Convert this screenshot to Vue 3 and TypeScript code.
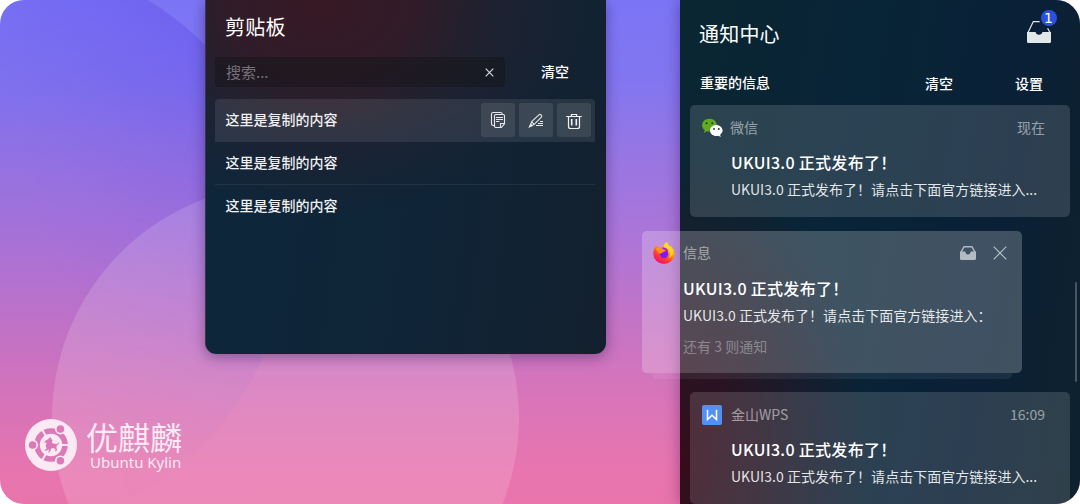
<script setup lang="ts">
import { ref } from 'vue'

interface Clip {
  id: number
  text: string
}

interface Notice {
  id: string
  app: string
  time?: string
  title: string
  body: string
  more?: string
  floating?: boolean
}

const clips = ref<Clip[]>([
  { id: 1, text: '这里是复制的内容' },
  { id: 2, text: '这里是复制的内容' },
  { id: 3, text: '这里是复制的内容' },
])
const activeClip = ref(1)

const notices: Notice[] = [
  { id: 'wechat', app: '微信', time: '现在', title: 'UKUI3.0 正式发布了！', body: 'UKUI3.0 正式发布了！请点击下面官方链接进入...' },
  { id: 'firefox', app: '信息', title: 'UKUI3.0 正式发布了！', body: 'UKUI3.0 正式发布了！请点击下面官方链接进入：', more: '还有 3 则通知', floating: true },
  { id: 'wps', app: '金山WPS', time: '16:09', title: 'UKUI3.0 正式发布了！', body: 'UKUI3.0 正式发布了！请点击下面官方链接进入...' },
]
</script>

<template>
  <div class="desktop">
    <svg class="wallpaper" viewBox="0 0 1080 504" aria-hidden="true">
      <defs>
        <linearGradient id="disc" gradientUnits="userSpaceOnUse" x1="0" y1="60" x2="270" y2="0">
          <stop offset="0" stop-color="#5a45e6" stop-opacity="0.14" />
          <stop offset="1" stop-color="#4a30e4" stop-opacity="0.38" />
        </linearGradient>
        <linearGradient id="fade" x1="0" y1="0" x2="0" y2="1">
          <stop offset="0" stop-color="#fff" />
          <stop offset="0.5" stop-color="#fff" stop-opacity="0.45" />
          <stop offset="0.88" stop-color="#fff" stop-opacity="0.06" />
        </linearGradient>
        <mask id="discMask"><rect y="-40" width="300" height="570" fill="url(#fade)" /></mask>
      </defs>
      <circle cx="3" cy="244" r="283.5" fill="url(#disc)" mask="url(#discMask)" />
      <circle cx="285.5" cy="418" r="233.5" fill="#fff" fill-opacity="0.15" />
    </svg>

    <div class="brand">
      <svg class="brand-mark" viewBox="0 0 52 52">
        <circle cx="26" cy="26" r="26" fill="#fbe9f3" />
        <circle cx="26" cy="26" r="14" fill="none" stroke="#dc7ab7" stroke-width="5.6" />
        <g stroke="#fbe9f3" stroke-width="2">
          <path d="M35 26h9M21.5 18.2l-5-8.6M21.5 33.8l-5 8.6" />
        </g>
        <g fill="#dc7ab7" stroke="#fbe9f3" stroke-width="1.6">
          <circle cx="7.6" cy="26" r="4.6" />
          <circle cx="35.4" cy="10" r="4.6" />
          <circle cx="35.4" cy="41.8" r="4.6" />
        </g>
        <path fill="#dc7ab7" d="M25.5 18l.8 1.8 1.2 1.6-.8 2.2 2.2 1.2 3 .1 2.6-1.9-.8 2.3-1.9 1.1-.4 2.300.8 2.600-2.300 1.500.6-2.500-1.800-1.200-2.600.5-.4 2.100-2.600 2.500 1.200-3.900-3.500 1.800-1.600-1.200 2.400-1-.8-3.200.8-3.300-2.200.3.600-1.700 3.200-2z" />
      </svg>
      <div class="brand-text">
        <span class="brand-zh">优麒麟</span>
        <span class="brand-en">Ubuntu Kylin</span>
      </div>
    </div>

    <section class="clipboard">
      <h2>剪贴板</h2>
      <div class="search-row">
        <div class="search">
          <span>搜索...</span>
          <svg viewBox="0 0 9 9" width="9" height="9"><path d="M.7.7l7.6 7.6M8.3.7L.7 8.3" stroke="#dedce1" stroke-width="1.1" /></svg>
        </div>
        <button class="link">清空</button>
      </div>
      <ul>
        <li v-for="clip in clips" :key="clip.id" :class="{ active: clip.id === activeClip }">
          <span class="clip-text">{{ clip.text }}</span>
          <div v-if="clip.id === activeClip" class="actions">
            <button>
              <svg viewBox="0 0 34 34" fill="none" stroke="#e6e7ea" stroke-width="1.1">
                <path d="M13 22.5h-.8a1.7 1.7 0 0 1-1.7-1.7v-9.6a1.7 1.7 0 0 1 1.7-1.7h7.3a1.7 1.7 0 0 1 1.7 1.7" />
                <path d="M14.7 11.5h7.6a1.2 1.2 0 0 1 1.2 1.2v8.1l-3.2 3.7h-5.600a1.200 1.200 0 0 1-1.200-1.200v-10.600a1.200 1.200 0 0 1 1.200-1.200z" />
                <path d="M15 14.5h7M15 16.5h7M15 18.5h3.4M19.5 24.3v-3.8H23.5" />
              </svg>
            </button>
            <button>
              <svg viewBox="0 0 34 34" fill="none" stroke="#e6e7ea" stroke-width="1.1">
                <path d="M12.6 18.7l7.3-6.9a1.4 1.4 0 0 1 2 0l.4.4a1.4 1.4 0 0 1 0 2l-7 7.1-4.3 2.2zM12.6 18.7l2.6 2.6" />
                <path d="M10.4 23.9l1.2-2.8 1.5 1.5z" fill="#e6e7ea" />
                <path d="M21 18.500h3M19 20.500h5M17 22.500h7" />
              </svg>
            </button>
            <button>
              <svg viewBox="0 0 34 34" fill="none" stroke="#f0f1f3" stroke-width="1.2">
                <path d="M9.2 13.5h15.6M14.4 13.2v-1.7h5.2v1.7M11.5 13.5v10a2 2 0 0 0 2 2h7a2 2 0 0 0 2-2v-10" />
                <path d="M14.7 16v6.4M19.3 16v6.4" stroke-width="1.6" />
              </svg>
            </button>
          </div>
        </li>
      </ul>
    </section>

    <section class="center">
      <header>
        <h2>通知中心</h2>
        <div class="inbox">
          <svg viewBox="0 0 24 22" width="24" height="22">
            <path d="M.8 12L6.3.6h6.4M20.6 7.2L23.2 12" fill="none" stroke="#e2e7ea" stroke-width="1.2" />
            <path d="M0 11h8.6c.3 1.7 1.4 2.8 3.4 2.8s3.1-1.1 3.4-2.8H24v9.5a1.5 1.5 0 0 1-1.5 1.5h-21A1.5 1.5 0 0 1 0 20.5z" fill="#e2e7ea" />
          </svg>
          <b>1</b>
        </div>
      </header>
      <nav>
        <span>重要的信息</span>
        <button class="link">清空</button>
        <button class="link">设置</button>
      </nav>

      <div class="notices">
        <article v-for="n in notices" :key="n.id" :class="[n.id, { floating: n.floating }]">
          <div class="top">
            <svg v-if="n.id === 'wechat'" class="app-icon" viewBox="0 0 22 22">
              <path d="M7.5 1.8C3.4 1.8.1 4.6.1 8.2c0 2 1 3.7 2.7 4.9l-.9 2.9 3.1-1.7c.8.2 1.6.3 2.5.3 4.1 0 7.3-2.8 7.3-6.4s-3.2-6.4-7.3-6.4z" fill="#62ab1e" />
              <circle cx="4.6" cy="6.3" r="1" fill="#183a10" /><circle cx="10.3" cy="6.3" r="1" fill="#183a10" />
              <path d="M14.3 8c-3.5 0-6.3 2.5-6.3 5.5s2.8 5.5 6.3 5.5c.7 0 1.4-.1 2-.3l2.5 1.3-.7-2.3c1.5-1 2.5-2.5 2.5-4.2 0-3-2.8-5.5-6.3-5.5z" fill="#fff" />
              <circle cx="12" cy="12" r=".9" fill="#1d2c33" /><circle cx="16.8" cy="12" r=".9" fill="#1d2c33" />
            </svg>
            <svg v-else-if="n.id === 'firefox'" class="app-icon" viewBox="0 0 22 24">
              <defs>
                <linearGradient id="fx" x1=".85" y1=".1" x2=".3" y2="1">
                  <stop offset="0" stop-color="#ffdf1a" /><stop offset=".35" stop-color="#ffa01c" />
                  <stop offset=".65" stop-color="#ff4526" /><stop offset="1" stop-color="#f5087d" />
                </linearGradient>
              </defs>
              <path d="M2.4 6.2L3.2 4.5 5 6.3c1.7-.7 3.2-.7 4.8-.3C10.3 3.8 12 2 14 .8c.2 2.4 1.6 3.3 3.3 5 .4-.1.5-.5.5-1.1 2.7 2.8 4 5.6 3.9 8.4A10.7 10.2 0 0 1 11 23 10.7 10.2 0 0 1 .3 12.900c0-2.700.7-5.100 2.100-6.700z" fill="url(#fx)" />
              <path d="M14 1.2c-2 1.8-3.5 3.4-2.9 5.2 3.8.3 5.5 2.8 6.2 5.7.3 2.4-.5 4-1.7 5.4 5.5-3.3 5.5-8.2 1.7-11.5C15.4 4.7 14.4 3.2 14 1.2z" fill="#ffdc1c" />
              <circle cx="11" cy="13" r="4.2" fill="#8118f0" />
              <path d="M8.5 6.8c3-.9 5.8.3 6.5 3.2l-.2 2.5-3-3z" fill="#b01ae0" />
              <path d="M2.8 7c2.8-.7 4.8.7 6.8 1.5l3.2.8c-.6 1.8-2.7 1.7-3.7 2.4-1 .7-1.600 1-2.600.8C5 11.800 3.500 9.700 2.800 7z" fill="#ff921b" />
            </svg>
            <svg v-else class="app-icon" viewBox="0 0 20 20">
              <rect width="20" height="20" rx="2" fill="#5390f5" />
              <path d="M5.5 4.8v9.7L10 10.3l4.5 4.2V4.8" fill="none" stroke="#fff" stroke-width="1.5" />
            </svg>
            <span class="app-name">{{ n.app }}</span>
            <time v-if="n.time">{{ n.time }}</time>
            <div v-else class="tools">
              <svg viewBox="0 0 16 14" width="16" height="14">
                <path d="M.9 6.5L4 .7h8l3.1 5.8" fill="none" stroke="#b3bcc3" stroke-width="1.4" />
                <path d="M0 5.6h5.3c.2 2 1 2.900 2.700 2.900s2.500-.9 2.700-2.900H16v6.900a1.500 1.500 0 0 1-1.500 1.500h-13A1.500 1.500 0 0 1 0 12.500z" fill="#b3bcc3" />
              </svg>
              <svg viewBox="0 0 14 14" width="14" height="14"><path d="M.7.7l12.6 12.6M13.3.7L.7 13.3" stroke="#b3bcc3" stroke-width="1.2" /></svg>
            </div>
          </div>
          <h3>{{ n.title }}</h3>
          <p>{{ n.body }}</p>
          <p v-if="n.more" class="more">{{ n.more }}</p>
        </article>
      </div>
      <i class="scrollbar"></i>
    </section>
  </div>
</template>

<style>
body {
  background: #fff;
  overflow: hidden;
}
</style>

<style scoped>
.desktop {
  position: relative;
  box-sizing: border-box;
  width: 1080px;
  height: 504px;
  overflow: hidden;
  border-radius: 24px;
  background: linear-gradient(180deg, #7b75f6 0%, #8276f0 16%, #9976e2 32%, #ab75d8 46%, #c474c6 64%, #da75b8 80%, #e875ae 94%, #ea74ac 100%);
  font-family: "Noto Sans CJK SC", sans-serif;
  font-size: 14px;
  color: #fff;
}
.wallpaper {
  position: absolute;
  inset: 0;
  width: 1080px;
  height: 504px;
}
h2, h3, p, ul {
  margin: 0;
  padding: 0;
}
h2 {
  font-size: 20px;
  font-weight: 400;
  line-height: 30px;
  letter-spacing: 0.2px;
}
button {
  padding: 0;
  border: 0;
  background: none;
  color: inherit;
  font: inherit;
}
.link {
  font-weight: 500;
  line-height: 20px;
}

.brand {
  position: absolute;
  left: 25px;
  top: 419px;
  display: flex;
  color: #fbe9f3;
}
.brand-mark {
  width: 52px;
  height: 52px;
}
.brand-text {
  display: flex;
  flex-direction: column;
  margin-left: 9px;
  padding-top: 3px;
  white-space: nowrap;
}
.brand-zh {
  font-family: "Liberation Sans", "Noto Sans CJK SC", sans-serif;
  font-size: 32px;
  line-height: 34px;
  height: 31px;
}
.brand-en {
  margin-left: 4px;
  font-family: "Noto Sans", sans-serif;
  font-size: 15px;
  line-height: 18px;
}

.clipboard {
  position: absolute;
  left: 205px;
  top: 0;
  box-sizing: border-box;
  width: 401px;
  height: 354px;
  padding: 12px 11px 0 10px;
  border-radius: 0 0 11px 11px;
  background:
    radial-gradient(ellipse 275px 215px at 115px 0, rgba(58, 24, 36, 0.96), rgba(54, 27, 38, 0.85) 35%, rgba(42, 32, 44, 0.5) 65%, rgba(24, 32, 48, 0) 100%),
    linear-gradient(98deg, #0d263a 10%, #0f2437 55%, #13212f 95%);
  box-shadow: 0 3px 14px rgba(30, 10, 60, 0.4), inset 1px 0 0 rgba(80, 70, 80, 0.6);
}
.clipboard h2 {
  margin-left: 10px;
}
.search-row {
  display: flex;
  align-items: center;
  margin-top: 15px;
}
.search {
  box-sizing: border-box;
  display: flex;
  align-items: center;
  justify-content: space-between;
  width: 290px;
  height: 30px;
  padding: 0 11px;
  border-radius: 4px;
  background: rgba(20, 20, 24, 0.5);
  color: #77707a;
  font-size: 15px;
}
.search span {
  margin-top: -1px;
}
.search-row .link {
  margin: -2px 0 0 36px;
}
.clipboard ul {
  margin-top: 12px;
  list-style: none;
}
.clipboard li {
  box-sizing: border-box;
  display: flex;
  align-items: center;
  justify-content: space-between;
  height: 43px;
  padding: 0 4px 0 10.5px;
  border-bottom: 1px solid rgba(255, 255, 255, 0.07);
  font-weight: 500;
  color: #f0f0f2;
}
.clip-text {
  margin-top: -2px;
}
.clipboard li:last-child {
  border-bottom-color: transparent;
}
.clipboard li.active {
  border-radius: 4px 4px 0 0;
  background: rgba(255, 255, 255, 0.09);
  border-bottom-color: transparent;
}
.actions {
  display: flex;
  gap: 4px;
}
.actions button {
  width: 34px;
  height: 34px;
  border-radius: 3px;
  background: rgba(255, 255, 255, 0.09);
}
.actions svg {
  display: block;
  width: 34px;
  height: 34px;
}

.center {
  position: absolute;
  left: 680px;
  top: 0;
  box-sizing: border-box;
  width: 400px;
  height: 504px;
  padding: 19px 10px 0;
  background:
    radial-gradient(ellipse 190px 300px at 0 460px, rgba(56, 10, 24, 0.95), rgba(52, 14, 28, 0.72) 35%, rgba(20, 28, 46, 0) 100%),
    linear-gradient(100deg, #0a2632 0%, #082437 40%, #0a2036 75%, #0e212e 95%);
  box-shadow: 0 0 14px rgba(40, 10, 60, 0.4);
}
.center header {
  display: flex;
  justify-content: space-between;
  padding: 0 19px 0 9px;
}
.inbox {
  position: relative;
  height: 22px;
  padding-top: 2px;
}
.inbox svg {
  display: block;
}
.inbox b {
  position: absolute;
  left: 13.5px;
  top: -9px;
  width: 16px;
  height: 16px;
  border-radius: 50%;
  background: #2b50dc;
  font: 400 14px/16px "DejaVu Sans", sans-serif;
  text-align: center;
}
.center nav {
  display: flex;
  align-items: center;
  margin-top: 23px;
  padding-left: 10px;
  height: 21px;
  font-weight: 500;
}
.center nav span {
  width: 225px;
  line-height: 20px;
  margin-top: -2px;
}
.center nav .link {
  width: 28px;
  margin-right: 62px;
}
.center nav .link:last-child {
  margin-right: 0;
}
.notices {
  display: flex;
  flex-direction: column;
  margin-top: 12px;
}
article {
  position: relative;
  box-sizing: border-box;
  width: 380px;
  height: 112px;
  flex: none;
  padding: 10px 25px 0 12px;
  border-radius: 5px;
  background: rgba(255, 255, 255, 0.14);
  white-space: nowrap;
}
.top {
  display: flex;
  align-items: center;
  height: 25px;
  color: rgba(255, 255, 255, 0.52);
}
.app-icon {
  width: 20px;
  height: 20px;
  margin: 1px 9px 0 0;
  overflow: visible;
}
.wechat .app-icon {
  width: 22px;
  height: 22px;
  margin: 0 6px 0 0;
}
.firefox .app-icon {
  width: 22px;
  height: 24px;
  margin: 0 8px 2px -1px;
}
.app-name {
  line-height: 20px;
  margin-bottom: 1px;
}
.firefox .app-name {
  margin-bottom: 3px;
}
time {
  margin: 0 0 2px auto;
  line-height: 20px;
}
h3 {
  margin: 10px 0 0 29px;
  font-size: 16px;
  font-weight: 500;
  line-height: 24px;
  letter-spacing: 0.3px;
}
p {
  margin: 5px 0 0 29px;
  line-height: 20px;
  letter-spacing: 0.03px;
  color: rgba(255, 255, 255, 0.88);
}
article.floating {
  height: 142px;
  margin: 14px 0 19px -48px;
  padding-right: 15px;
  background: rgba(255, 255, 255, 0.22);
}
article.floating::after {
  content: "";
  position: absolute;
  left: 10px;
  right: 10px;
  top: 100%;
  height: 6px;
  border-radius: 0 0 5px 5px;
  background: rgba(255, 255, 255, 0.07);
}
.tools {
  display: flex;
  align-items: center;
  gap: 17px;
  margin: 0 0 2px auto;
}
.floating .more {
  margin-top: 11px;
  color: rgba(255, 255, 255, 0.35);
}
.scrollbar {
  position: absolute;
  left: 395px;
  top: 282px;
  width: 2px;
  height: 100px;
  border-radius: 1px;
  background: rgba(255, 255, 255, 0.24);
}
</style>
